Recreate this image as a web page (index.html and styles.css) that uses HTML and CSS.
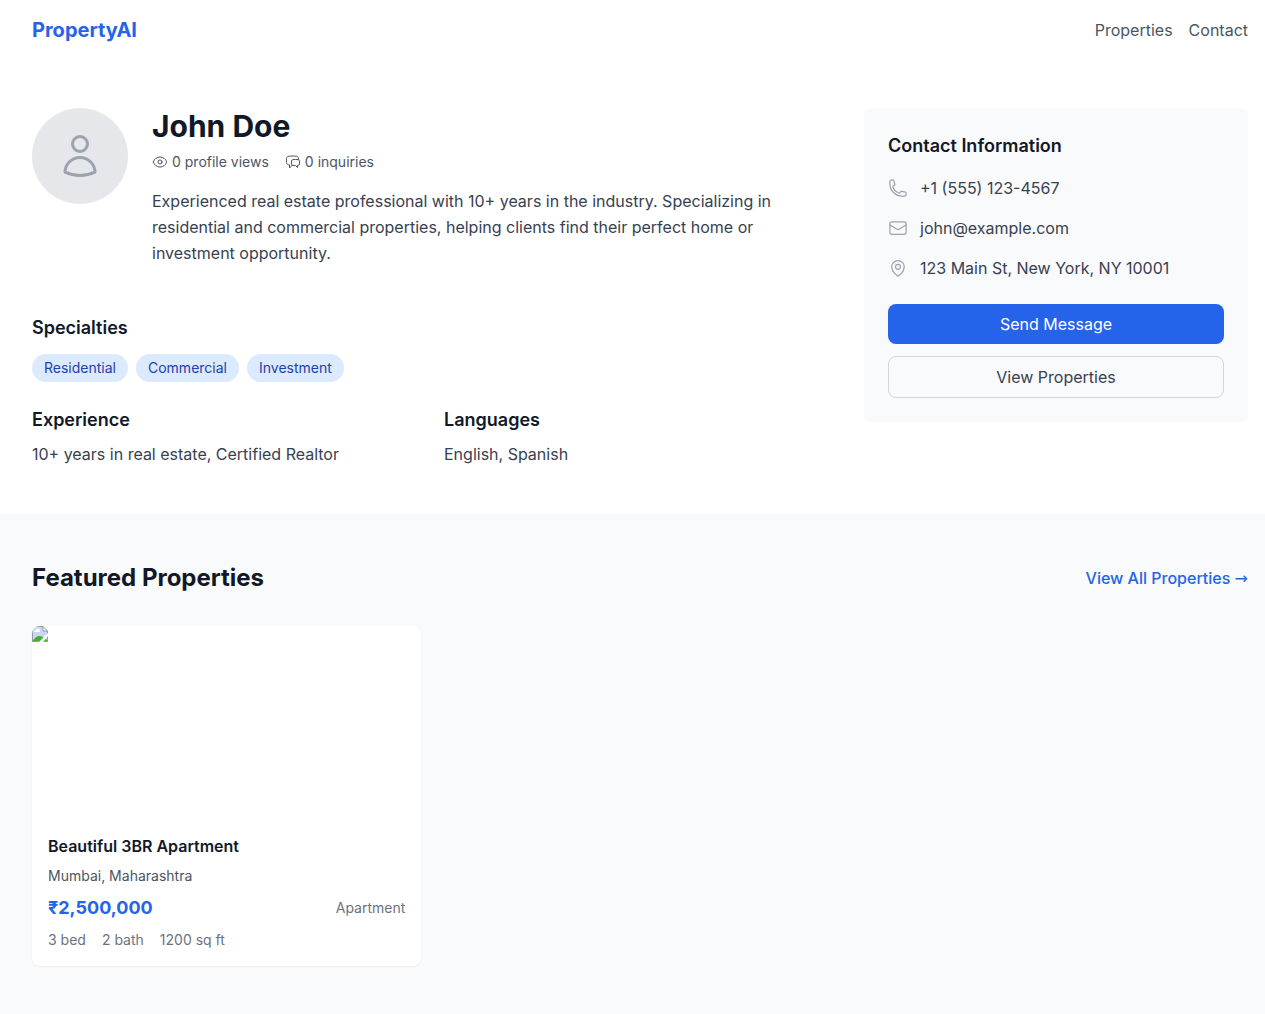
FILE: index.html
```html
<!DOCTYPE html>
<html lang="en">
<head>
<meta charset="utf-8">
<meta name="viewport" content="width=device-width, initial-scale=1">
<title>John Doe - PropertyAI</title>
<link rel="stylesheet" href="styles.css">
</head>
<body>
<header class="container topbar">
  <a class="brand" href="#">PropertyAI</a>
  <nav class="nav">
    <a href="#properties">Properties</a>
    <a href="#contact">Contact</a>
  </nav>
</header>
<main>
  <section class="container hero">
    <div class="about">
      <div class="profile">
        <div class="avatar">
          <svg class="icon icon-xl" viewBox="0 0 24 24" aria-hidden="true"><path d="M15.75 6a3.75 3.75 0 11-7.5 0 3.75 3.75 0 017.5 0zM4.501 20.118a7.5 7.5 0 0114.998 0A17.933 17.933 0 0112 21.75c-2.676 0-5.216-.584-7.499-1.632z"/></svg>
        </div>
        <div class="profile-text">
          <h1>John Doe</h1>
          <div class="stats">
            <span class="stat">
              <svg class="icon icon-sm" viewBox="0 0 24 24" aria-hidden="true"><path d="M2.036 12.322a1.012 1.012 0 010-.639C3.423 7.51 7.36 4.5 12 4.5c4.638 0 8.573 3.007 9.963 7.178.07.207.07.431 0 .639C20.577 16.49 16.64 19.5 12 19.5c-4.638 0-8.573-3.007-9.963-7.178z"/><path d="M15 12a3 3 0 11-6 0 3 3 0 016 0z"/></svg>
              0 profile views
            </span>
            <span class="stat">
              <svg class="icon icon-sm" viewBox="0 0 24 24" aria-hidden="true"><path d="M20.25 8.511c.884.284 1.5 1.128 1.5 2.097v4.286c0 1.136-.847 2.1-1.98 2.193-.34.027-.68.052-1.02.072v3.091l-3-3c-1.354 0-2.694-.055-4.02-.163a2.115 2.115 0 01-.825-.242m9.345-8.334a2.126 2.126 0 00-.476-.095 48.64 48.64 0 00-8.048 0c-1.131.094-1.976 1.057-1.976 2.192v4.286c0 .837.46 1.58 1.155 1.951m9.345-8.334V6.637c0-1.621-1.152-3.026-2.76-3.235A48.455 48.455 0 0011.25 3c-2.115 0-4.198.137-6.24.402-1.608.209-2.76 1.614-2.76 3.235v6.226c0 1.621 1.152 3.026 2.76 3.235.577.075 1.157.14 1.74.194V21l4.155-4.155"/></svg>
              0 inquiries
            </span>
          </div>
          <p class="bio">Experienced real estate professional with 10+ years in the industry. Specializing in residential and commercial properties, helping clients find their perfect home or investment opportunity.</p>
        </div>
      </div>
      <div class="specialties">
        <h2 class="heading">Specialties</h2>
        <ul class="chips">
          <li>Residential</li>
          <li>Commercial</li>
          <li>Investment</li>
        </ul>
      </div>
      <div class="facts">
        <div>
          <h2 class="heading">Experience</h2>
          <p>10+ years in real estate, Certified Realtor</p>
        </div>
        <div>
          <h2 class="heading">Languages</h2>
          <p>English, Spanish</p>
        </div>
      </div>
    </div>
    <aside class="contact" id="contact">
      <h2 class="heading">Contact Information</h2>
      <ul class="contact-list">
        <li>
          <svg class="icon icon-md" viewBox="0 0 24 24" aria-hidden="true"><path d="M2.25 6.75c0 8.284 6.716 15 15 15h2.25a2.25 2.25 0 002.25-2.25v-1.372c0-.516-.351-.966-.852-1.091l-4.423-1.106c-.44-.11-.902.055-1.173.417l-.97 1.293c-.282.376-.769.542-1.21.38a12.035 12.035 0 01-7.143-7.143c-.162-.441.004-.928.38-1.21l1.293-.97c.363-.271.527-.734.417-1.173L6.963 3.102a1.125 1.125 0 00-1.091-.852H4.5A2.25 2.25 0 002.25 4.5v2.25z"/></svg>
          <span>+1 (555) 123-4567</span>
        </li>
        <li>
          <svg class="icon icon-md" viewBox="0 0 24 24" aria-hidden="true"><path d="M21.75 6.75v10.5a2.25 2.25 0 01-2.25 2.25h-15a2.25 2.25 0 01-2.25-2.25V6.75m19.5 0A2.25 2.25 0 0019.5 4.5h-15a2.25 2.25 0 00-2.25 2.25m19.5 0v.243a2.25 2.25 0 01-1.07 1.916l-7.5 4.615a2.25 2.25 0 01-2.36 0L3.32 8.91a2.25 2.25 0 01-1.07-1.916V6.75"/></svg>
          <span>john@example.com</span>
        </li>
        <li>
          <svg class="icon icon-md" viewBox="0 0 24 24" aria-hidden="true"><path d="M15 10.5a3 3 0 11-6 0 3 3 0 016 0z"/><path d="M19.5 10.5c0 7.142-7.5 11.25-7.5 11.25S4.5 17.642 4.5 10.5a7.5 7.5 0 1115 0z"/></svg>
          <span>123 Main St, New York, NY 10001</span>
        </li>
      </ul>
      <div class="actions">
        <button class="btn btn-primary" type="button">Send Message</button>
        <button class="btn btn-outline" type="button">View Properties</button>
      </div>
    </aside>
  </section>
  <section class="featured" id="properties">
    <div class="container">
      <div class="featured-head">
        <h2>Featured Properties</h2>
        <a href="#all">View All Properties <span class="arrow">→</span></a>
      </div>
      <div class="grid">
        <article class="card">
          <div class="card-media">
            <svg class="missing" viewBox="0 0 16 16" aria-hidden="true">
              <path fill="#fff" d="M0 0h11l5 5v11H0z"/>
              <path fill="#c4d7f7" d="M1 1h10v4h4v10H1z"/>
              <path fill="#fff" d="M2 6a2 2 0 0 1 2-2 2 2 0 0 1 4 1v1z"/>
              <path fill="#48ad2b" d="M1 15v-1c2-1 3-4 6-4 3 0 5 2 8 4v1z"/>
              <path fill="none" stroke="#9a9a9a" d="M.5 16V.5H11L15.500 5v11M0 15.500h16M11 .5V5h4.500"/>
              <path fill="#fff" d="M16 7v3l-5 6H7z"/>
            </svg>
          </div>
          <div class="card-body">
            <h3>Beautiful 3BR Apartment</h3>
            <p class="place">Mumbai, Maharashtra</p>
            <div class="price-row">
              <span class="price">₹2,500,000</span>
              <span>Apartment</span>
            </div>
            <div class="specs">
              <span>3 bed</span>
              <span>2 bath</span>
              <span>1200 sq ft</span>
            </div>
          </div>
        </article>
      </div>
    </div>
  </section>
</main>
</body>
</html>
```

FILE: styles.css
```css
*, *::before, *::after { box-sizing: border-box; }

body {
  margin: 0;
  background: #fff;
  color: #374151;
  font: 16px/24px Inter, "Liberation Sans", sans-serif;
}

h1, h2, h3, p, ul { margin: 0; padding: 0; }
ul { list-style: none; }
a { color: inherit; text-decoration: none; }

.container {
  max-width: 1280px;
  margin: 0 auto;
  padding: 0 17px 0 32px;
}

.icon {
  flex: none;
  fill: none;
  stroke: currentColor;
  stroke-width: 1.5;
  stroke-linecap: round;
  stroke-linejoin: round;
}
.icon-sm { width: 16px; height: 16px; }
.icon-md { width: 20px; height: 20px; color: #9ca3af; }
.icon-xl { width: 48px; height: 48px; color: #9ca3af; }

.topbar {
  display: flex;
  align-items: center;
  justify-content: space-between;
  padding-top: 16px;
  padding-bottom: 16px;
}
.brand { color: #2563eb; font-size: 20px; line-height: 28px; font-weight: 700; }
.nav { display: flex; gap: 16px; color: #4b5563; }

.hero {
  display: grid;
  grid-template-columns: repeat(3, minmax(0, 1fr));
  gap: 32px;
  align-items: start;
  padding-top: 48px;
  padding-bottom: 48px;
}
.about { grid-column: span 2; }

.profile { display: flex; align-items: flex-start; gap: 24px; }
.avatar {
  display: flex;
  align-items: center;
  justify-content: center;
  flex: none;
  width: 96px;
  height: 96px;
  border-radius: 50%;
  background: #e5e7eb;
}
.profile-text { flex: 1; }
h1 { color: #111827; font-size: 30px; line-height: 36px; font-weight: 700; }
.stats {
  display: flex;
  gap: 16px;
  margin-top: 8px;
  color: #4b5563;
  font-size: 14px;
  line-height: 20px;
}
.stat { display: flex; align-items: center; gap: 4px; }
.bio { margin-top: 16px; line-height: 26px; }

.heading { color: #111827; font-size: 18px; line-height: 28px; font-weight: 600; }
.specialties { margin-top: 48px; }
.chips { display: flex; flex-wrap: wrap; gap: 8px; margin-top: 12px; }
.chips li {
  padding: 4px 12px;
  border-radius: 14px;
  background: #dbeafe;
  color: #1e40af;
  font-size: 14px;
  line-height: 20px;
}
.facts {
  display: grid;
  grid-template-columns: repeat(2, minmax(0, 1fr));
  gap: 24px;
  margin-top: 24px;
}
.facts p { margin-top: 8px; }

.contact { padding: 24px; border-radius: 8px; background: #f9fafb; }
.contact-list { display: grid; gap: 16px; margin-top: 16px; }
.contact-list li { display: flex; align-items: center; gap: 12px; }
.actions { display: grid; gap: 12px; margin-top: 24px; }
.btn {
  padding: 8px 16px;
  border: 0;
  border-radius: 8px;
  font: inherit;
  cursor: pointer;
}
.btn-primary { background: #2563eb; color: #fff; }
.btn-outline { border: 1px solid #d1d5db; background: transparent; color: #374151; }

.featured { padding: 48px 0; background: #f9fafb; }
.featured-head { display: flex; align-items: center; justify-content: space-between; }
.featured-head h2 { color: #111827; font-size: 24px; line-height: 32px; font-weight: 700; }
.featured-head a { color: #2563eb; font-weight: 500; }
.arrow { font-family: "DejaVu Sans", sans-serif; }
.grid {
  display: grid;
  grid-template-columns: repeat(3, minmax(0, 1fr));
  gap: 24px;
  margin-top: 32px;
}
.card {
  overflow: hidden;
  border-radius: 8px;
  background: #fff;
  box-shadow: 0 1px 2px rgba(0, 0, 0, 0.05);
}
.card-media { height: 192px; }
.missing { display: block; width: 16px; height: 16px; }
.card-body {
  display: grid;
  gap: 8px;
  padding: 16px;
  color: #6b7280;
  font-size: 14px;
  line-height: 20px;
}
.card h3 { color: #111827; font-size: 16px; line-height: 24px; font-weight: 600; }
.place { color: #4b5563; }
.price-row { display: flex; align-items: center; justify-content: space-between; }
.price { color: #2563eb; font-size: 18px; line-height: 28px; font-weight: 700; }
.specs { display: flex; gap: 16px; }
```
